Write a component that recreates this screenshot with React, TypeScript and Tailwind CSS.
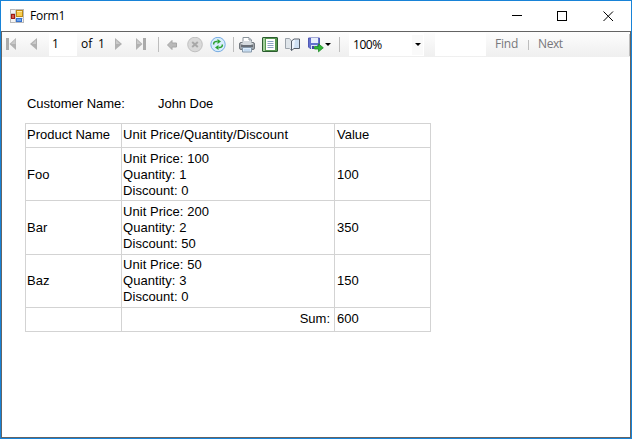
import type { ReactNode } from "react";

function Sep({ className }: { className: string }) {
  return <span className={`h-[15px] w-px shrink-0 bg-[#bdbdbd] ${className}`} />;
}

function Icon({ w = 16, className = "", children }: { w?: number; className?: string; children: ReactNode }) {
  return (
    <svg width={w} height="16" viewBox={`0 0 ${w} 16`} className={`shrink-0 ${className}`}>
      {children}
    </svg>
  );
}

function TitleBar() {
  return (
    <header className="flex h-[30px] shrink-0 items-center bg-white">
      <svg width="14" height="14" viewBox="0 0 14 14" className="ml-[9px]">
        <rect x=".5" y=".5" width="13" height="13" fill="#f4f4f4" stroke="#b9b9b9" />
        <path d="M5.5 0V14M0 9.5H14M0 4.5H6" stroke="#c9c9c9" />
        <rect x="6.5" y="1.5" width="6" height="6" fill="#f9cd4d" stroke="#bd8a14" />
        <path d="M7 2.5H12" stroke="#ffe9a0" />
        <rect x="1.5" y="5.5" width="3" height="4" fill="#d4584a" stroke="#a11a12" />
        <rect x="6.5" y="9.5" width="5" height="3" fill="#6ea6ef" stroke="#3671cc" />
      </svg>
      <span className="ml-[6px] w-[481px] text-[12px] leading-4 tracking-[-0.25px]">Form1</span>
      <svg width="11" height="11" viewBox="0 0 11 11" className="ml-[1px]" shapeRendering="crispEdges">
        <path d="M0 4.5H10" stroke="#000" />
      </svg>
      <svg width="11" height="11" viewBox="0 0 11 11" className="ml-[34px]" shapeRendering="crispEdges">
        <rect x=".5" y=".5" width="9" height="9" fill="none" stroke="#000" />
      </svg>
      <svg width="11" height="11" viewBox="0 0 11 11" className="ml-[35px]">
        <path d="M.5 .5L10 10M10 .5L.5 10" stroke="#000" />
      </svg>
    </header>
  );
}

function Toolbar() {
  return (
    <div className="flex h-[25px] shrink-0 items-center bg-linear-to-b from-[#fdfdfd] to-[#efefef] text-[12px] leading-4">
      <div className="flex items-center pb-px">
        <Icon w={10} className="ml-[4px]">
          <path d="M0 2H3V14H0Z" fill="#ababab" />
          <path d="M10 2V14L3.5 8Z" fill="#b2b2b2" />
          <path d="M9.5 3V8H5Z" fill="#cacaca" />
        </Icon>
        <Icon w={8} className="ml-[14px]">
          <path d="M7 2V14L0 8Z" fill="#b1b1b1" />
          <path d="M6 4V8H2Z" fill="#cacaca" />
        </Icon>
        <span className="ml-[11px] flex h-[23px] w-[28px] items-center bg-white pl-[3px]">1</span>
        <span className="ml-[4px] w-[18px]">of</span>
        <span className="-ml-px w-[11px]">1</span>
        <Icon w={8} className="ml-[6px]">
          <path d="M0 2V14L7 8Z" fill="#b1b1b1" />
          <path d="M1 4V8H5Z" fill="#cacaca" />
        </Icon>
        <Icon w={10} className="ml-[13px]">
          <path d="M0 2V14L6.5 8Z" fill="#b2b2b2" />
          <path d="M7 2H10V14H7Z" fill="#ababab" />
          <path d="M1 4V8H5Z" fill="#cacaca" />
        </Icon>
      </div>
      <Sep className="ml-[12px]" />
      <Icon w={10} className="ml-[8px]">
        <path d="M.5 8L5 3.5V6H9.5V10H5V12.5Z" fill="#b9b9b9" stroke="#a6a6a6" />
      </Icon>
      <Icon className="ml-[10px]">
        <circle cx="8" cy="7.5" r="7.3" fill="#d9d9d9" stroke="#c0c0c0" />
        <path d="M5.2 5L10.8 10M10.8 5L5.2 10" stroke="#a8a8a8" strokeWidth="2" />
      </Icon>
      <Icon className="ml-[7px]">
        <circle cx="8" cy="7.5" r="7.2" fill="#d9edfd" stroke="#76abe2" />
        <path d="M3.7 7.5V6.5Q4 4.5 6.5 4.5H7.5M12.3 7.5V8.5Q12 10.5 9.5 10.5H8.5" fill="none" stroke="#2fa233" strokeWidth="1.5" />
        <path d="M7.5 2L11 4.5L7.5 7Z M8.5 8L5 10.5L8.5 13Z" fill="#2aa42e" />
      </Icon>
      <Sep className="ml-[7px]" />
      <Icon className="ml-[5px]">
        <path d="M4 6V.5H10L12.5 3V6" fill="#fff" stroke="#8a939b" />
        <path d="M10 1V3H12" fill="none" stroke="#8a939b" />
        <rect x=".5" y="5.5" width="15" height="7" rx="1.5" fill="#a0a5aa" stroke="#71777d" />
        <path d="M2 6.5H4M12 6.5H14" stroke="#d3d8dc" />
        <path d="M3.5 4H12.5V8H3.5Z" fill="#d5dade" />
        <path d="M2 9H14" stroke="#565d64" strokeWidth="1.5" />
        <path d="M3.5 10.5H12.5V15H3.5Z" fill="#dcecfb" stroke="#8497a9" />
        <path d="M5 13H11" stroke="#a9c9e8" />
      </Icon>
      <Icon className="ml-[7px]">
        <rect x=".5" y=".5" width="15" height="14" rx=".5" fill="#55974f" stroke="#2c5c30" />
        <path d="M1.5 1V14M2.5 1V14" stroke="#a2cf9c" />
        <rect x="4" y="2" width="9" height="11" fill="#fff" />
        <path d="M5.5 4.5H11.5M5.5 6.5H11.5M5.5 8.5H11.5M5.5 10.5H11.5" stroke="#8ba3c3" />
      </Icon>
      <Icon className="ml-[7px]">
        <path d="M.5 1.5H4.5L6.5 4V13.5L4.5 11.5H.5Z" fill="#dfe5ea" stroke="#9ba3ab" />
        <path d="M6.5 4L9 2H14.5V11.5H9L6.5 13.5Z" fill="#eef5fd" stroke="#565f6a" />
        <path d="M10 3H14V11H9Z" fill="#cfe1f4" />
      </Icon>
      <Icon className="ml-[7px]">
        <path d="M.5 1H11.5V11.5H2L.5 10Z" fill="#6470cf" stroke="#5059b3" />
        <rect x="3" y="1" width="7" height="5" fill="#e7effc" />
        <rect x="3" y="8" width="6" height="4" fill="#dbe2f7" />
        <rect x="4" y="9" width="2" height="3" fill="#3f489c" />
        <path d="M6.5 9.5H10.5V6.8L15.3 10.8L10.5 14.8V12H6.5Z" fill="#2fb536" stroke="#1c8a24" strokeWidth=".8" />
      </Icon>
      <Icon w={6} className="ml-[1px]">
        <path d="M0 6H6L3 9Z" fill="#000" />
      </Icon>
      <Sep className="ml-[8px]" />
      <div className="ml-[9px] flex h-[23px] w-[75px] items-center justify-between bg-white pl-[4px] pr-px">
        <span className="tracking-[-0.45px]">100%</span>
        <span className="flex h-[20px] w-[11px] items-center justify-center bg-[#fafafa]">
          <Icon w={6}>
            <path d="M0 6H6L3 9Z" fill="#000" />
          </Icon>
        </span>
      </div>
      <span className="ml-[11px] h-[23px] w-[51px] shrink-0 bg-white" />
      <span className="ml-[9px] w-[33px] pb-px tracking-[-0.2px] text-[#77777b]">Find</span>
      <span className="h-[10px] w-px bg-[#bdbdbd]" />
      <span className="ml-[9px] pb-px tracking-[-0.4px] text-[#77777b]">Next</span>
      <span className="ml-auto h-[22px] w-px bg-[#bdbdbd]" />
    </div>
  );
}

const rows = [
  { name: "Foo", price: 100, quantity: 1, discount: 0, value: 100, height: "h-[53px]", inset: "pt-[2px]" },
  { name: "Bar", price: 200, quantity: 2, discount: 50, value: 350, height: "h-[54px]", inset: "" },
  { name: "Baz", price: 50, quantity: 3, discount: 0, value: 150, height: "h-[53px]", inset: "" },
];

const rowBase = "grid grid-cols-[96px_213px_96px] border-b border-[#d3d3d3]";
const cell = "flex items-center border-r border-[#d3d3d3]";

function Report() {
  return (
    <main className="grow bg-white pl-[23px] pt-[39px] font-['Liberation_Sans',Arial,sans-serif] text-[13px] leading-4">
      <div className="flex h-[27px]">
        <span className="w-[131px] pl-[2px] tracking-[-0.03px]">Customer Name:</span>
        <span className="pl-[2px] tracking-[-0.05px]">John Doe</span>
      </div>
      <section className="w-[406px] border-l border-t border-[#d3d3d3]">
        <div className={`${rowBase} h-[24px]`}>
          <div className={`${cell} pb-[2px] pl-px`}>Product Name</div>
          <div className={`${cell} pb-[2px] pl-px tracking-[0.09px]`}>Unit Price/Quantity/Discount</div>
          <div className={`${cell} pb-[2px] pl-[2px]`}>Value</div>
        </div>
        {rows.map((row) => (
          <div key={row.name} className={`${rowBase} ${row.height}`}>
            <div className={`${cell} ${row.inset} pl-px`}>{row.name}</div>
            <div className={`${cell} ${row.inset} pl-px tracking-[0.05px]`}>
              <div>
                <p>Unit Price: {row.price}</p>
                <p>Quantity: {row.quantity}</p>
                <p>Discount: {row.discount}</p>
              </div>
            </div>
            <div className={`${cell} ${row.inset} pl-[2px]`}>{row.value}</div>
          </div>
        ))}
        <div className={`${rowBase} h-[24px]`}>
          <div className={cell} />
          <div className={`${cell} justify-end pr-[4px] pb-[2px]`}>Sum:</div>
          <div className={`${cell} pb-[2px] pl-[2px]`}>600</div>
        </div>
      </section>
    </main>
  );
}

export default function App() {
  return (
    <div className="flex h-[439px] w-[632px] flex-col border border-[#1883d7] bg-white font-['Open_Sans','Noto_Sans',sans-serif] text-black">
      <TitleBar />
      <div className="flex grow flex-col border border-[#646464]">
        <Toolbar />
        <Report />
      </div>
    </div>
  );
}
